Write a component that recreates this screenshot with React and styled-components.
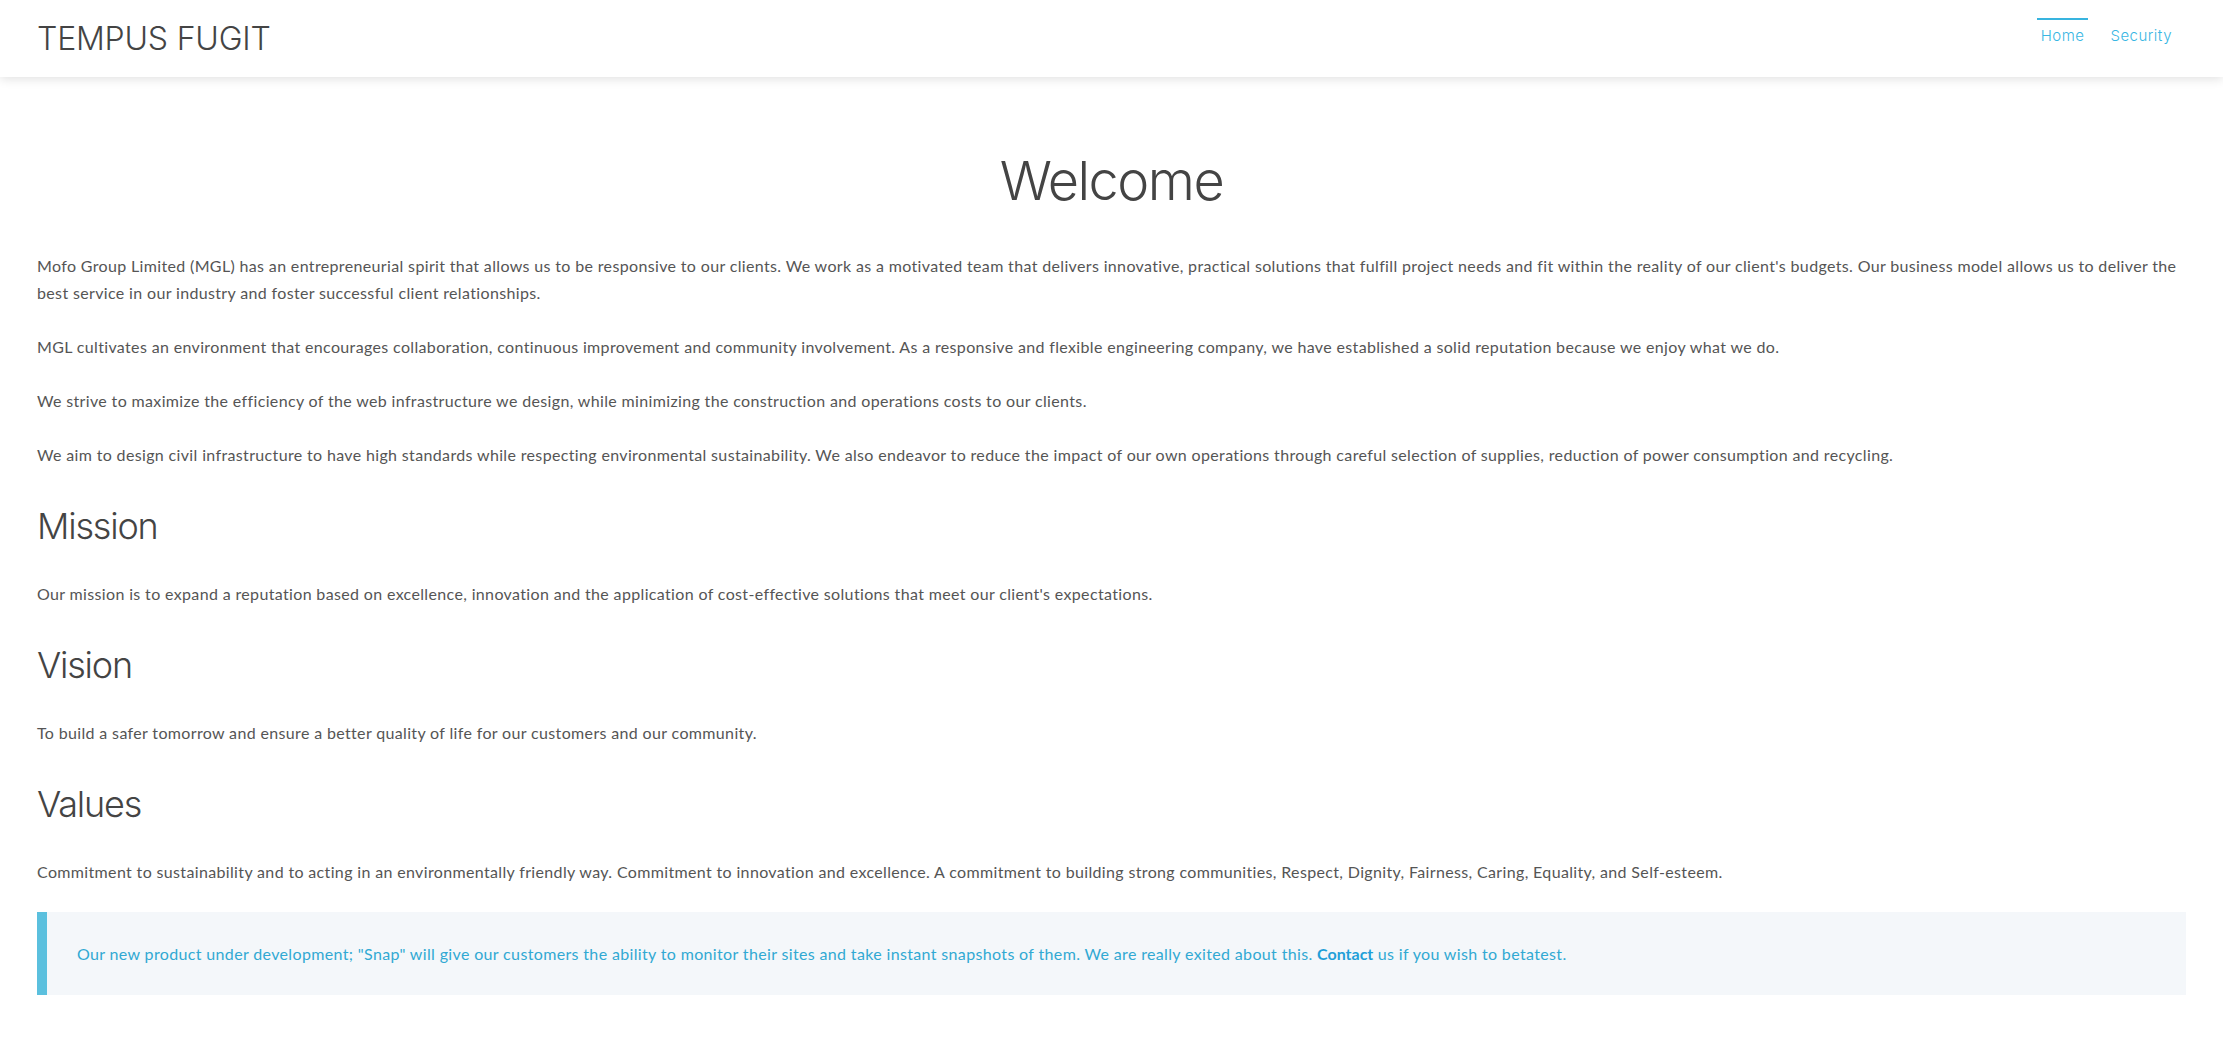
import React from "react";
import styled, { createGlobalStyle } from "styled-components";

const GlobalStyle = createGlobalStyle`
    html, body {
        margin: 0;
        padding: 0;
        background: #ffffff;
    }
    body {
        font-family: Lato, "Liberation Sans", sans-serif;
        color: #555555;
    }
`;

const navLinks = [
    { label: "Home", active: true },
    { label: "Security", active: false },
];

const sections = [
    {
        title: "Mission",
        text: "Our mission is to expand a reputation based on excellence, innovation and the application of cost-effective solutions that meet our client's expectations.",
    },
    {
        title: "Vision",
        text: "To build a safer tomorrow and ensure a better quality of life for our customers and our community.",
    },
    {
        title: "Values",
        text: "Commitment to sustainability and to acting in an environmentally friendly way. Commitment to innovation and excellence. A commitment to building strong communities, Respect, Dignity, Fairness, Caring, Equality, and Self-esteem.",
    },
];

export default function App() {
    return (
        <>
            <GlobalStyle />
            <Header>
                <Brand>TEMPUS FUGIT</Brand>
                <Nav>
                    {navLinks.map((link) => (
                        <NavLink key={link.label} href="#" active={link.active ? 1 : 0}>
                            {link.label}
                        </NavLink>
                    ))}
                </Nav>
            </Header>
            <Main>
                <PageTitle>Welcome</PageTitle>
                <Text>
                    Mofo Group Limited (MGL) has an entrepreneurial spirit that allows us to be responsive to our
                    clients. We work as a motivated team that delivers innovative, practical solutions that fulfill
                    project needs and fit within the reality of our client's budgets. Our business model allows us to
                    deliver the best service in our industry and foster successful client relationships.
                </Text>
                <Text>
                    MGL cultivates an environment that encourages collaboration, continuous improvement and community
                    involvement. As a responsive and flexible engineering company, we have established a solid
                    reputation because we enjoy what we do.
                </Text>
                <Text>
                    We strive to maximize the efficiency of the web infrastructure we design, while minimizing the
                    construction and operations costs to our clients.
                </Text>
                <Text>
                    We aim to design civil infrastructure to have high standards while respecting environmental
                    sustainability. We also endeavor to reduce the impact of our own operations through careful
                    selection of supplies, reduction of power consumption and recycling.
                </Text>
                {sections.map((s) => (
                    <React.Fragment key={s.title}>
                        <SectionTitle>{s.title}</SectionTitle>
                        <Text>{s.text}</Text>
                    </React.Fragment>
                ))}
                <Callout>
                    Our new product under development; "Snap" will give our customers the ability to monitor their
                    sites and take instant snapshots of them. We are really exited about this.{" "}
                    <CalloutLink href="#">Contact</CalloutLink> us if you wish to betatest.
                </Callout>
            </Main>
        </>
    );
}

const Header = styled.header`
    display: flex;
    justify-content: space-between;
    align-items: center;
    height: 77px;
    padding: 0 47px 0 37px;
    background: #ffffff;
    box-shadow: 0 2px 10px rgba(0, 0, 0, 0.12);
    position: relative;
    z-index: 1;
`;

const Brand = styled.a`
    font-family: Inter, "Noto Sans", sans-serif;
    font-size: 32px;
    font-weight: 300;
    color: #444444;
    letter-spacing: -0.2px;
    line-height: 1;
`;

const Nav = styled.nav`
    display: flex;
    gap: 18px;
    align-self: flex-start;
    margin-top: 18px;
`;

const NavLink = styled.a`
    display: block;
    padding: 6px 4px 0;
    border-top: 2px solid ${({ active }) => (active ? "#38b4df" : "transparent")};
    font-family: Inter, "Noto Sans", sans-serif;
    font-size: 15px;
    font-weight: 300;
    line-height: 20px;
    letter-spacing: 0.5px;
    color: #38b6e3;
    text-decoration: none;
`;

const Main = styled.main`
    padding: 72px 37px 40px;
`;

const PageTitle = styled.h1`
    margin: 0 0 38px;
    font-family: Inter, "Noto Sans", sans-serif;
    font-size: 54px;
    font-weight: 300;
    line-height: 1.2;
    letter-spacing: -1.5px;
    color: #444444;
    text-align: center;
`;

/* top margin collapses with the paragraph's bottom margin above it */
const SectionTitle = styled.h2`
    margin: 37px 0 32px;
    font-family: Inter, "Noto Sans", sans-serif;
    font-size: 36px;
    font-weight: 300;
    line-height: 1.2;
    letter-spacing: -1.2px;
    color: #444444;
`;

const Text = styled.p`
    margin: 0 0 27px;
    font-size: 16px;
    line-height: 27px;
    letter-spacing: 0.35px;
    color: #555555;
`;

const Callout = styled.p`
    margin: 27px 0 0;
    padding: 28px 30px;
    border-left: 10px solid #5bc0de;
    background: #f4f7fa;
    font-size: 16px;
    line-height: 27px;
    letter-spacing: 0.35px;
    color: #31a9d3;
`;

const CalloutLink = styled.a`
    font-weight: 700;
    letter-spacing: 0;
    color: #1f9fd8;
    text-decoration: none;
`;
